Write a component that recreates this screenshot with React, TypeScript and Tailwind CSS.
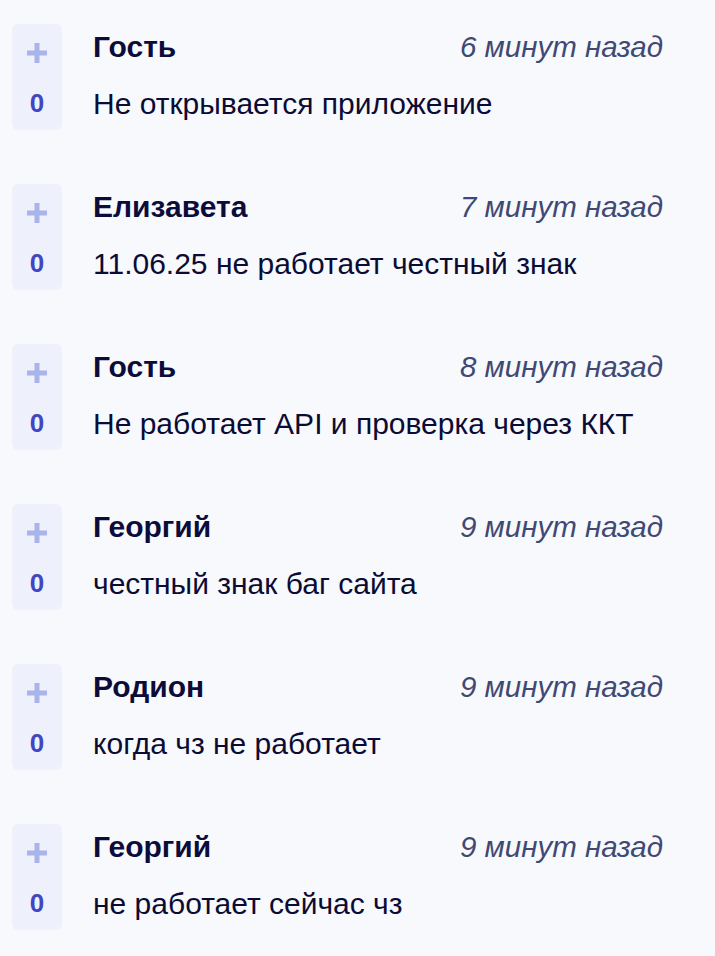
const items = [
  { name: 'Гость', time: '6 минут назад', text: 'Не открывается приложение' },
  { name: 'Елизавета', time: '7 минут назад', text: '11.06.25 не работает честный знак' },
  { name: 'Гость', time: '8 минут назад', text: 'Не работает API и проверка через ККТ' },
  { name: 'Георгий', time: '9 минут назад', text: 'честный знак баг сайта' },
  { name: 'Родион', time: '9 минут назад', text: 'когда чз не работает' },
  { name: 'Георгий', time: '9 минут назад', text: 'не работает сейчас чз' },
]

function PlusIcon() {
  return (
    <svg width="22" height="22" viewBox="0 0 22 22" fill="none">
      <path d="M11 1v20M1 11h20" stroke="#aab4e8" strokeWidth="5" />
    </svg>
  )
}

export default function App() {
  return (
    <div
      className="min-h-[956px] w-[715px] bg-[#f8f9fc] pl-[12px] pr-[52px] pt-[24px]"
      style={{ fontFamily: '"Liberation Sans", Arial, sans-serif' }}
    >
      <div className="flex flex-col gap-[54px]">
        {items.map((item, i) => (
          <div key={i} className="flex gap-[31px]">
            {/* Vote box */}
            <div className="flex h-[106px] w-[50px] shrink-0 flex-col items-center rounded-[6px] bg-[#eef1fb]">
              <div className="mt-[18px] flex h-[22px] items-center">
                <PlusIcon />
              </div>
              <div className="mt-[24px] text-[26px] font-bold leading-[30px] text-[#4146c2]">0</div>
            </div>

            {/* Content */}
            <div className="flex flex-1 flex-col gap-[17px] pt-[3px]">
              <div className="flex items-center justify-between leading-[40px]">
                <span className="text-[30px] font-bold text-[#0b0c3a]">{item.name}</span>
                <span className="text-[29.5px] italic text-[#3e4a74]">{item.time}</span>
              </div>
              <div className="text-[30px] leading-[40px] text-[#0b0c35]">{item.text}</div>
            </div>
          </div>
        ))}
      </div>
    </div>
  )
}
